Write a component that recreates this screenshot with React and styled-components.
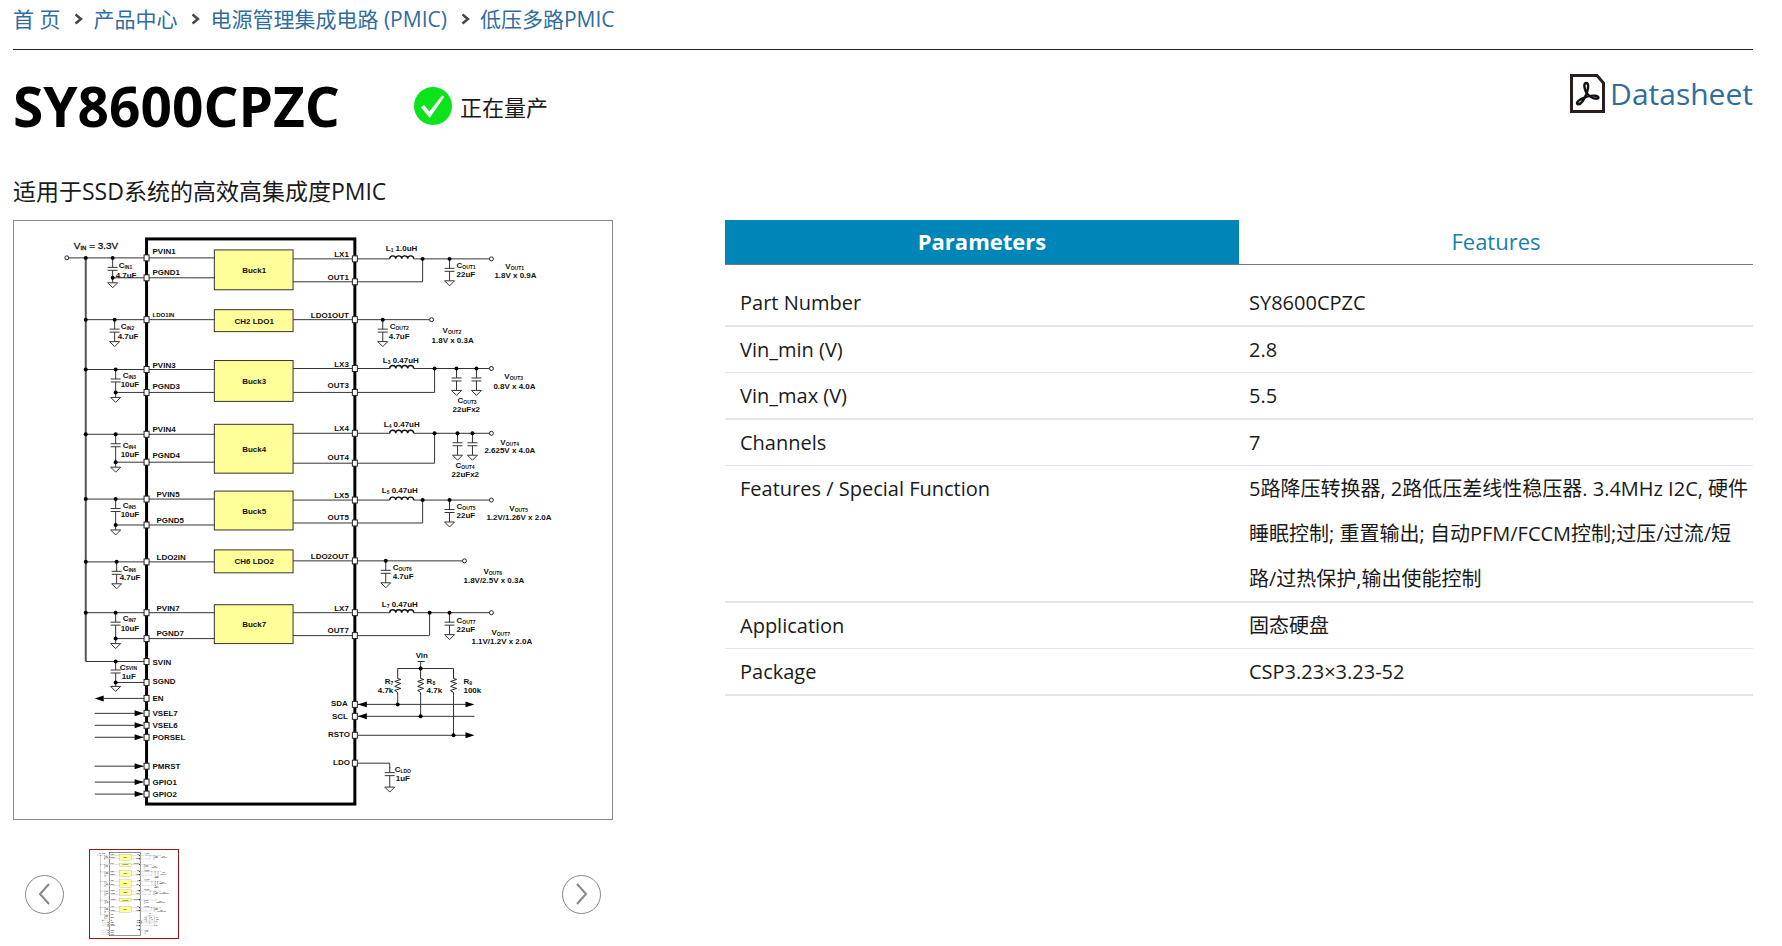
import React, { useState } from 'react'
import styled, { createGlobalStyle } from 'styled-components'

const crumbs = ['首 页', '产品中心', '电源管理集成电路 (PMIC)', '低压多路PMIC']

const parameters = [
  ['Part Number', 'SY8600CPZC'],
  ['Vin_min (V)', '2.8'],
  ['Vin_max (V)', '5.5'],
  ['Channels', '7'],
  [
    'Features / Special Function',
    '5路降压转换器, 2路低压差线性稳压器. 3.4MHz I2C, 硬件睡眠控制; 重置输出; 自动PFM/FCCM控制;过压/过流/短路/过热保护,输出使能控制',
  ],
  ['Application', '固态硬盘'],
  ['Package', 'CSP3.23×3.23-52'],
]

// every y is measured inside the 600 x 600 schematic
const bucks = [
  {
    n: 1, inY: 37, gndY: 57, block: [29, 69], labels: [33, 54], labelX: 139, capX: 99, cap: '4.7uF', capText: [105, 47, 102, 57],
    lxY: 38, outY: 61, outLabels: [36, 59], coil: '1.0uH', coilText: [373, 30], joinX: 410, caps: [437],
    coutText: [444, 47, 444, 56], cout: '22uF', vout: '1.8V x 0.9A', voutText: [493, 48, 482, 57],
  },
  {
    n: 3, inY: 149, gndY: 172, block: [140, 181], labels: [147, 169], labelX: 139, capX: 102, cap: '10uF', capText: [109, 158, 107, 167],
    lxY: 148, outY: 172, outLabels: [146, 168], coil: '0.47uH', coilText: [370, 142], joinX: 422, caps: [444, 464],
    coutText: [445, 183, 440, 192], cout: '22uFx2', vout: '0.8V x 4.0A', voutText: [492, 159, 481, 169],
  },
  {
    n: 4, inY: 214, gndY: 242, block: [204, 253], labels: [212, 238], labelX: 139, capX: 102, cap: '10uF', capText: [109, 228, 107, 237],
    lxY: 213, outY: 243, outLabels: [211, 240], coil: '0.47uH', coilText: [371, 207], joinX: 422, caps: [445, 460],
    coutText: [443, 248, 439, 257], cout: '22uFx2', vout: '2.625V x 4.0A', voutText: [488, 225, 472, 233],
  },
  {
    n: 5, inY: 279, gndY: 305, block: [271, 310], labels: [277, 303], labelX: 143, capX: 102, cap: '10uF', capText: [109, 288, 107, 297],
    lxY: 280, outY: 303, outLabels: [278, 300], coil: '0.47uH', coilText: [369, 273], joinX: 410, caps: [437],
    coutText: [444, 289, 444, 298], cout: '22uF', vout: '1.2V/1.26V x 2.0A', voutText: [497, 291, 474, 300],
  },
  {
    n: 7, inY: 393, gndY: 419, block: [385, 424], labels: [391, 416], labelX: 143, capX: 102, cap: '10uF', capText: [109, 401, 107, 411],
    lxY: 393, outY: 416, outLabels: [391, 413], coil: '0.47uH', coilText: [369, 387], joinX: 417, caps: [437],
    coutText: [444, 403, 444, 412], cout: '22uF', vout: '1.1V/1.2V x 2.0A', voutText: [479, 415, 459, 424],
  },
]

const ldos = [
  {
    n: 2, name: 'LDO1', y: 99, outY: 99, block: [89, 111], labelX: 139, labelY: 96, small: true, capX: 101, capText: [107, 108, 104, 118],
    outCapX: 370, endX: 419, coutText: [377, 108, 376, 118], vout: '1.8V x 0.3A', voutText: [430, 112, 419, 122],
  },
  {
    n: 6, name: 'LDO2', y: 342, outY: 341, block: [330, 353], labelX: 143, labelY: 340, capX: 103, capText: [109, 351, 106, 360],
    outCapX: 373, endX: 452, coutText: [380, 350, 380, 359], vout: '1.8V/2.5V x 0.3A', voutText: [471, 354, 451, 363],
  },
]

const signals = [
  ['VSEL7', 494],
  ['VSEL6', 506],
  ['PORSEL', 518],
  ['PMRST', 547],
  ['GPIO1', 563],
  ['GPIO2', 575],
]

const Sub = ({ x, y, main, sub, rest }) => (
  <text x={x} y={y}>
    {main}
    <tspan fontSize="5" dy="1">{sub}</tspan>
    {rest && <tspan dy="-1"> {rest}</tspan>}
  </text>
)

const Wire = ({ d }) => <path d={d} fill="none" stroke="#333" strokeWidth="1" />
const Dot = ({ x, y }) => <circle cx={x} cy={y} r="2" fill="#000" />
const Terminal = ({ x, y }) => <circle cx={x} cy={y} r="2" fill="#fff" stroke="#222" />
const Pin = ({ x, y }) => <rect x={x - 2.5} y={y - 3} width="5" height="6" fill="#fff" stroke="#222" />
const Ground = ({ x, y }) => <path d={`M${x - 5} ${y}h10l-5 5z`} fill="#fff" stroke="#333" />

const Capacitor = ({ x, top, plate, ground }) => (
  <g>
    <Wire d={`M${x} ${top}V${plate - 1.5}M${x} ${plate + 1.5}V${ground}`} />
    <path d={`M${x - 5} ${plate - 1.5}h10M${x - 5} ${plate + 1.5}h10`} stroke="#333" />
    <Ground x={x} y={ground} />
  </g>
)

const Coil = ({ y }) => (
  <path
    d={`M377 ${y}c0-4 6-4 6 0c0-4 6-4 6 0c0-4 6-4 6 0c0-4 6-4 6 0`}
    fill="none"
    stroke="#111"
    strokeWidth="1.4"
  />
)

const Resistor = ({ x }) => (
  <path
    d={`M${x} 449v10l3 1l-6 2l6 2l-6 3l6 2l-6 2l3 2v3`}
    fill="none"
    stroke="#222"
  />
)

const Arrow = ({ x, y, left }) => (
  <path d={left ? `M${x} ${y}l9-3v6z` : `M${x} ${y}l-9-3v6z`} fill="#000" />
)

const Block = ({ range, children }) => (
  <g>
    <rect x="201" y={range[0]} width="79" height={range[1] - range[0]} fill="#ffff99" stroke="#333" />
    <text x="241" y={(range[0] + range[1]) / 2 + 3} textAnchor="middle">{children}</text>
  </g>
)

const Buck = ({ n, inY, gndY, block, labels, labelX, capX, cap, capText, lxY, outY, outLabels, coil, coilText, joinX, caps, coutText, cout, vout, voutText }) => (
  <g>
    <Wire d={`M72 ${inY}H202M${capX} ${gndY}H202`} />
    <Capacitor x={capX} top={inY} plate={inY + 11} ground={gndY + 5} />
    <Dot x={72} y={inY} />
    <Dot x={capX} y={inY} />
    <Dot x={capX} y={gndY} />
    <Sub x={capText[0]} y={capText[1]} main="C" sub={`IN${n}`} />
    <text x={capText[2]} y={capText[3]}>{cap}</text>
    <text x={labelX} y={labels[0]}>PVIN{n}</text>
    <text x={labelX} y={labels[1]}>PGND{n}</text>
    <Pin x={133} y={inY} />
    <Pin x={133} y={gndY} />

    <Wire d={`M280 ${lxY}H377M401 ${lxY}H477M280 ${outY}H${joinX}V${lxY}`} />
    <Coil y={lxY} />
    {caps.map(x => (
      <g key={x}>
        <Capacitor x={x} top={lxY} plate={lxY + 11} ground={lxY + 22} />
        <Dot x={x} y={lxY} />
      </g>
    ))}
    <Dot x={joinX} y={lxY} />
    <Terminal x={479} y={lxY} />
    <text x="336" y={outLabels[0]} textAnchor="end">LX{n}</text>
    <text x="336" y={outLabels[1]} textAnchor="end">OUT{n}</text>
    <Pin x={342} y={lxY} />
    <Pin x={342} y={outY} />
    <Sub x={coilText[0]} y={coilText[1]} main="L" sub={n} rest={coil} />
    <Sub x={coutText[0]} y={coutText[1]} main="C" sub={`OUT${n}`} />
    <text x={coutText[2]} y={coutText[3]}>{cout}</text>
    <Sub x={voutText[0]} y={voutText[1]} main="V" sub={`OUT${n}`} />
    <text x={voutText[2]} y={voutText[3]}>{vout}</text>
    <Block range={block}>Buck{n}</Block>
  </g>
)

const Ldo = ({ n, name, y, outY, block, labelX, labelY, small, capX, capText, outCapX, endX, coutText, vout, voutText }) => (
  <g>
    <Wire d={`M72 ${y}H202M280 ${outY}H${endX - 2}`} />
    <Capacitor x={capX} top={y} plate={y + 11} ground={y + 22} />
    <Capacitor x={outCapX} top={outY} plate={outY + 11} ground={outY + 22} />
    <Dot x={72} y={y} />
    <Dot x={capX} y={y} />
    <Dot x={outCapX} y={outY} />
    <Terminal x={endX} y={outY} />
    <Sub x={capText[0]} y={capText[1]} main="C" sub={`IN${n}`} />
    <text x={capText[2]} y={capText[3]}>4.7uF</text>
    <text x={labelX} y={labelY} fontSize={small ? 6 : 8}>{name}IN</text>
    <text x="336" y={outY - 2} textAnchor="end">{name}OUT</text>
    <Pin x={133} y={y} />
    <Pin x={342} y={outY} />
    <Sub x={coutText[0]} y={coutText[1]} main="C" sub={`OUT${n}`} />
    <text x={coutText[2]} y={coutText[3]}>4.7uF</text>
    <Sub x={voutText[0]} y={voutText[1]} main="V" sub={`OUT${n}`} />
    <text x={voutText[2]} y={voutText[3]}>{vout}</text>
    <Block range={block}>CH{n} {name}</Block>
  </g>
)

const Schematic = () => (
  <Drawing viewBox="0 0 600 600" role="img" aria-label="SY8600CPZC">
    <g id="schematic">
      <rect x="133" y="18" width="209" height="567" fill="none" stroke="#000" strokeWidth="3" />
      <path d="M72 37V442" stroke="#555" strokeWidth="2" />
      <Wire d="M55 37H72" />
      <Terminal x={53} y={37} />
      <text x="60" y="28" fontSize="10" fontWeight="400" stroke="#111" strokeWidth="0.3">
        V<tspan fontSize="6" dy="1">IN</tspan><tspan dy="-1"> = 3.3V</tspan>
      </text>

      {bucks.map(item => <Buck key={item.n} {...item} />)}
      {ldos.map(item => <Ldo key={item.n} {...item} />)}

      <Wire d="M72 442H133M102 463H133M90 479H133" />
      <Capacitor x={102} top={442} plate={452} ground={467} />
      <Dot x={102} y={442} />
      <Dot x={102} y={463} />
      <Sub x={106} y={450} main="C" sub="SVIN" />
      <text x="108" y="460">1uF</text>
      <Arrow x={81} y={479} left />
      <Pin x={133} y={442} />
      <Pin x={133} y={463} />
      <Pin x={133} y={479} />
      <text x="139" y="445">SVIN</text>
      <text x="139" y="465">SGND</text>
      <text x="139" y="482">EN</text>
      {signals.map(([name, y]) => (
        <g key={name}>
          <Wire d={`M81 ${y}H130`} />
          <Arrow x={130} y={y} />
          <Pin x={133} y={y} />
          <text x="139" y={y + 3}>{name}</text>
        </g>
      ))}

      {/* pull-ups */}
      <text x="403" y="438">Vin</text>
      <Wire d="M405 442H412M408 442V449M385 449H441M385 476V485M408 476V497M441 476V516" />
      <Resistor x={385} />
      <Resistor x={408} />
      <Resistor x={441} />
      <Sub x={372} y={465} main="R" sub="7" />
      <text x="365" y="474">4.7k</text>
      <Sub x={414} y={465} main="R" sub="8" />
      <text x="414" y="474">4.7k</text>
      <Sub x={451} y={465} main="R" sub="9" />
      <text x="451" y="474">100k</text>
      <Wire d="M345 485H455M345 497H462M345 516H455M345 544H377V549" />
      <Dot x={408} y={449} />
      <Dot x={385} y={485} />
      <Dot x={408} y={497} />
      <Dot x={441} y={516} />
      <Arrow x={345} y={485} left />
      <Arrow x={462} y={485} />
      <Arrow x={345} y={497} left />
      <Arrow x={462} y={516} />
      <Pin x={342} y={485} />
      <Pin x={342} y={497} />
      <Pin x={342} y={516} />
      <Pin x={342} y={544} />
      <text x="335" y="487" textAnchor="end">SDA</text>
      <text x="335" y="500" textAnchor="end">SCL</text>
      <text x="337" y="518" textAnchor="end">RSTO</text>
      <text x="337" y="546" textAnchor="end">LDO</text>
      <Capacitor x={377} top={548} plate={555} ground={568} />
      <Sub x={382} y={553} main="C" sub="LDO" />
      <text x="383" y="562">1uF</text>
    </g>
  </Drawing>
)

const CrumbArrow = () => (
  <Separator width="9" height="12" viewBox="0 0 9 12" aria-hidden="true">
    <path d="M1.5 1.5L7 6L1.5 10.5" fill="none" stroke="#444" strokeWidth="2.4" />
  </Separator>
)

const CheckIcon = () => (
  <svg width="38" height="38" viewBox="0 0 38 38" aria-hidden="true">
    <circle cx="19" cy="19" r="19" fill="#0be31b" />
    <path d="M7 20.5l3-2.5l5.3 6.5L28 8.5l2.2 1.2L15.8 31z" fill="#fff" />
  </svg>
)

const PdfIcon = () => (
  <svg width="35" height="39" viewBox="0 0 35 39" aria-hidden="true">
    <path d="M1.5 1.5H27L33.5 9V37.5H1.5z" fill="#fff" stroke="#2b1d1b" strokeWidth="3" />
    <path
      d="M16.5 19C14 14 13.5 9.500 16 9c3-.3 2.500 5 .8 10C14.500 25 11 30 8.500 30.300c-2.500 0-2-3 2.500-5.200c4.500-2.200 10-3.800 14-3.400c4.500.5 4.200 3 1.500 3C22.500 24.700 18.500 21.500 16.500 19z"
      fill="none"
      stroke="#111"
      strokeWidth="2.4"
      strokeLinejoin="round"
    />
  </svg>
)

const Chevron = ({ right }) => (
  <svg width="13" height="26" viewBox="0 0 13 26" aria-hidden="true">
    <path d={right ? 'M2 3L11 13L2 23' : 'M11 3L2 13L11 23'} fill="none" stroke="#888" strokeWidth="2" />
  </svg>
)

const App = () => {
  const [tab, setTab] = useState('Parameters')

  return (
    <Page>
      <GlobalStyle />
      <Breadcrumb>
        {crumbs.map((name, i) => (
          <React.Fragment key={name}>
            {i > 0 && <CrumbArrow />}
            <Crumb href="#">{name}</Crumb>
          </React.Fragment>
        ))}
      </Breadcrumb>

      <Header>
        <Title>SY8600CPZC</Title>
        <Status><CheckIcon />正在量产</Status>
        <Datasheet href="#"><PdfIcon />Datasheet</Datasheet>
      </Header>
      <Description>适用于SSD系统的高效高集成度PMIC</Description>

      <Content>
        <Gallery>
          <Frame><Schematic /></Frame>
          <Carousel>
            <RoundButton type="button" aria-label="Previous"><Chevron /></RoundButton>
            <Thumb type="button" aria-label="SY8600CPZC">
              <Drawing viewBox="0 0 600 600"><use href="#schematic" /></Drawing>
            </Thumb>
            <RoundButton type="button" aria-label="Next"><Chevron right /></RoundButton>
          </Carousel>
        </Gallery>
        <Details>
          <Tabs>
            {['Parameters', 'Features'].map(name => (
              <Tab key={name} type="button" $active={tab === name} onClick={() => setTab(name)}>
                {name}
              </Tab>
            ))}
          </Tabs>
          <Table>
            <tbody>
              {parameters.map(([name, value]) => (
                <Row key={name}>
                  <Name scope="row">{name}</Name>
                  <Value>{value}</Value>
                </Row>
              ))}
            </tbody>
          </Table>
        </Details>
      </Content>
    </Page>
  )
}

const GlobalStyle = createGlobalStyle`
  * {
    box-sizing: border-box;
  }
  body {
    margin: 0;
    background: #fff;
    color: #1a1a1a;
    font-family: "Open Sans", "Noto Sans CJK SC", sans-serif;
  }
  button {
    font-family: inherit;
    cursor: pointer;
  }
`

const Page = styled.main`
  padding: 0 29px 0 13px;
`

const Breadcrumb = styled.nav`
  display: flex;
  align-items: center;
  gap: 10px;
  height: 50px;
  padding-bottom: 11px;
  border-bottom: 1px solid #222;
  font-size: 21px;
`

const Separator = styled.svg`
  margin-left: 4px;
`

const Crumb = styled.a`
  color: #306d9f;
  line-height: 38px;
  text-decoration: none;
`

const Header = styled.header`
  display: flex;
  align-items: center;
  gap: 74px;
  height: 112px;
`

const Title = styled.h1`
  margin: 0;
  color: #000;
  font-size: 55px;
  line-height: 72px;
  font-weight: 700;
`

const Status = styled.div`
  display: flex;
  align-items: center;
  gap: 8px;
  font-size: 22px;
`

const Datasheet = styled.a`
  display: flex;
  align-items: center;
  align-self: flex-start;
  gap: 5px;
  height: 86px;
  margin-left: auto;
  color: #306d9f;
  font-size: 30px;
  text-decoration: none;
`

const Description = styled.p`
  margin: 0;
  font-size: 23px;
  line-height: 58px;
`

const Content = styled.div`
  display: grid;
  grid-template-columns: 600px 1fr;
  gap: 112px;
  align-items: start;
`

const Gallery = styled.section`
  display: flex;
  flex-direction: column;
  gap: 29px;
`

const Frame = styled.div`
  aspect-ratio: 1;
  border: 1px solid #8a8a8a;
`

const Drawing = styled.svg`
  display: block;
  width: 100%;
  height: 100%;
  font-family: "Liberation Sans", Arial, sans-serif;
  font-size: 8px;
  font-weight: 700;
  fill: #111;
`

const Carousel = styled.div`
  display: flex;
  align-items: center;
  gap: 25px;
  padding: 0 12px;
`

const RoundButton = styled.button`
  display: flex;
  align-items: center;
  justify-content: center;
  width: 39px;
  height: 39px;
  padding: 0;
  border: 1px solid #888;
  border-radius: 50%;
  background: #fff;

  &:last-child {
    margin-left: auto;
  }
`

const Thumb = styled.button`
  width: 90px;
  height: 90px;
  padding: 0;
  border: 1px solid #9c1414;
  background: #fff;
`

const Details = styled.section`
  min-width: 0;
`

const Tabs = styled.div`
  display: grid;
  grid-template-columns: 1fr 1fr;
  margin-bottom: 15px;
  border-bottom: 1px solid #777;
`

const Tab = styled.button`
  height: 44px;
  padding: 0 0 2px;
  border: 0;
  background: ${props => (props.$active ? '#0085b8' : '#fff')};
  color: ${props => (props.$active ? '#fff' : '#1680b0')};
  font-size: 22px;
  font-weight: ${props => (props.$active ? 700 : 400)};
`

const Table = styled.table`
  width: 100%;
  table-layout: fixed;
  border-spacing: 0;
  font-size: 20px;
  line-height: 45px;
`

const Row = styled.tr`
  th, td {
    border-bottom: 1px solid #e5e5e5;
  }
  &:nth-child(odd) th, &:nth-child(odd) td {
    border-bottom-width: 2px;
  }
`

const Name = styled.th`
  padding: 0 0 0 15px;
  font-weight: 400;
  text-align: left;
  vertical-align: top;
`

const Value = styled.td`
  padding: 0 0 0 10px;
`

export default App
